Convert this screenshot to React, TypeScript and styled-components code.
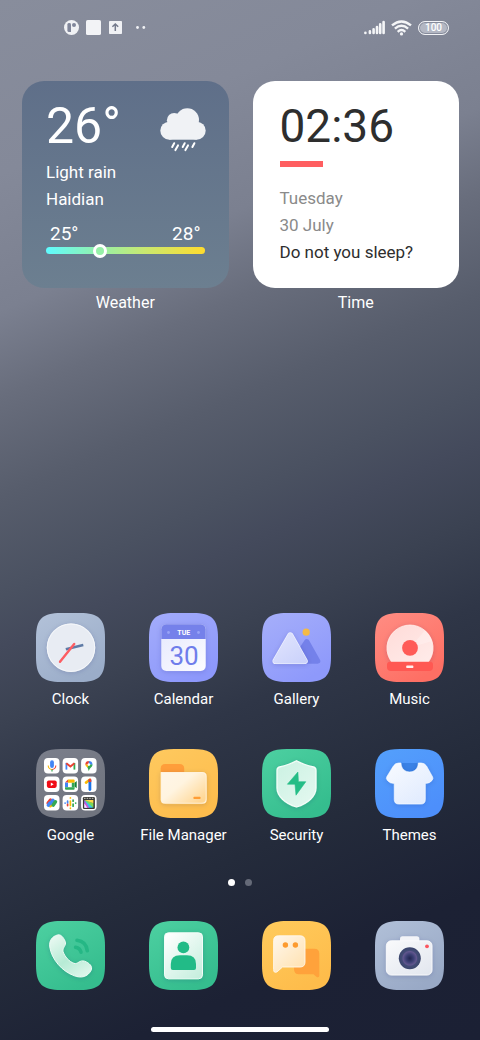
import React from "react";
import styled, { createGlobalStyle } from "styled-components";

const GlobalStyle = createGlobalStyle`
  * { box-sizing: border-box; }
  body {
    margin: 0;
    background: #1c2134;
    font-family: Roboto, "Noto Sans", sans-serif;
    color: #fff;
  }
  h1, p { margin: 0; font-weight: 400; }
`;

const Screen = styled.main`
  display: flex;
  flex-direction: column;
  min-height: 100vh;
  background: linear-gradient(
    157deg,
    #888d9c 0%,
    #848999 14%,
    #7b8090 25%,
    #686d7c 32%,
    #575d6c 40%,
    #4a5161 48%,
    #444a5c 52%,
    #3b4252 58%,
    #2f3647 65%,
    #242b3b 77%,
    #1c2134 88%,
    #1b2034 100%
  );
`;

const StatusBar = styled.header`
  display: flex;
  justify-content: space-between;
  align-items: center;
  height: 55px;
  padding: 0 31px 0 64px;
`;

const StatusGroup = styled.div<{ $gap: number }>`
  display: flex;
  align-items: center;
  gap: ${(p) => p.$gap}px;
  svg { display: block; }
`;

const Battery = styled.span`
  display: grid;
  place-items: center;
  width: 31px;
  height: 14px;
  border: 1px solid #f2f3f6;
  border-radius: 7px;
  background: #b3b7c3;
  box-shadow: inset 0 0 0 1px #868b9b;
  font-size: 10px;
  font-weight: 500;
  line-height: 12px;
`;

const Widgets = styled.section`
  display: grid;
  grid-template-columns: 1fr 1fr;
  gap: 24px;
  padding: 26px 21px 0 22px;
`;

const Widget = styled.article`
  display: flex;
  flex-direction: column;
  align-items: stretch;
`;

const Card = styled.div<{ $light?: boolean }>`
  aspect-ratio: 1;
  padding: ${(p) => (p.$light ? "20px 27px" : "20px 24px")};
  border-radius: 22px;
  background: ${(p) => (p.$light ? "#fff" : "linear-gradient(#5f6f89, #6c7f90)")};
  color: ${(p) => (p.$light ? "#2e2e2e" : "#fff")};
`;

const Caption = styled.span`
  margin-top: 5px;
  font-size: 16px;
  line-height: 20px;
  text-align: center;
`;

const CardTop = styled.div`
  display: flex;
  justify-content: space-between;
  align-items: flex-start;
  height: 58px;
  margin-right: -1px;

  svg { margin-top: 7px; }
`;

const Temperature = styled.p`
  font-size: 50px;
  line-height: 50px;
`;

const ClockFace = styled.h1`
  height: 50px;
  font-size: 46px;
  line-height: 50px;
`;

const Accent = styled.div`
  width: 43px;
  height: 6px;
  margin: 10px 0 18px;
  background: #ff5e60;
`;

const Line = styled.p<{ $muted?: boolean }>`
  font-size: 17px;
  line-height: 27px;
  white-space: nowrap;
  color: ${(p) => (p.$muted ? "#8a8a8a" : "inherit")};
`;

const Range = styled.div`
  display: flex;
  justify-content: space-between;
  padding: 0 4px;
  margin-top: 9px;
  font-size: 19px;
  line-height: 24px;
`;

const Track = styled.div`
  display: flex;
  align-items: center;
  height: 7px;
  margin-top: 1px;
  padding-left: 47px;
  border-radius: 4px;
  background: linear-gradient(90deg, #5ffbff, #96f0a8 34%, #c9e870 62%, #ffdc2e);
`;

const Thumb = styled.span`
  width: 14px;
  height: 14px;
  border: 3px solid #fff;
  border-radius: 50%;
  background: #96f0a8;
`;

const Spacer = styled.div`
  flex: 1;
  min-height: 24px;
`;

const AppGrid = styled.nav`
  display: grid;
  grid-template-columns: repeat(4, 1fr);
  row-gap: 40px;
  padding: 0 14px;
`;

const AppButton = styled.button`
  display: flex;
  flex-direction: column;
  align-items: center;
  gap: 7px;
  padding: 0;
  border: 0;
  background: none;
  color: #fff;
  font: 400 15px/20px Roboto, "Noto Sans", sans-serif;
  white-space: nowrap;
  cursor: pointer;
`;

const Pager = styled.div`
  display: flex;
  justify-content: center;
  gap: 10px;
  padding: 34px 0 35px;
`;

const PageDot = styled.button<{ $active?: boolean }>`
  width: 7px;
  height: 7px;
  padding: 0;
  border: 0;
  border-radius: 50%;
  background: ${(p) => (p.$active ? "#fff" : "#656a78")};
`;

const HomeBar = styled.div`
  width: 37%;
  height: 5px;
  margin: 37px auto 8px;
  border-radius: 3px;
  background: #fff;
`;

const TileSvg = styled.svg`
  display: block;
  width: 69px;
  height: 69px;
`;

const TILE =
  "M0 25C0 6 6 0 25 0H44C63 0 69 6 69 25V44C69 63 63 69 44 69H25C6 69 0 63 0 44Z";

function Tile({ id, from, to, children }: { id: string; from: string; to: string; children: React.ReactNode }) {
  return (
    <TileSvg viewBox="0 0 69 69" aria-hidden="true">
      <defs>
        <linearGradient id={`${id}-bg`} x1="0" y1="0" x2="0.6" y2="1">
          <stop offset="0" stopColor={from} />
          <stop offset="1" stopColor={to} />
        </linearGradient>
        <filter id={`${id}-sh`} x="-30%" y="-30%" width="160%" height="160%">
          <feDropShadow dx="0" dy="1" stdDeviation="2.5" floodColor="#203060" floodOpacity="0.16" />
        </filter>
      </defs>
      <path d={TILE} fill={`url(#${id}-bg)`} />
      {children}
    </TileSvg>
  );
}

function Fade({ id, from, to }: { id: string; from: string; to: string }) {
  return (
    <linearGradient id={id} x1="0.1" y1="0" x2="0.9" y2="1">
      <stop offset="0" stopColor={from} />
      <stop offset="1" stopColor={to} />
    </linearGradient>
  );
}

const ClockIcon = () => (
  <Tile id="clock" from="#b3c2d9" to="#9badc9">
    <circle cx="35" cy="34.7" r="24.2" fill="#e8ecf3" filter="url(#clock-sh)" />
    <circle cx="35" cy="34.7" r="23.7" fill="none" stroke="#f6f8fb" />
    <path d="M29.8 36.2L47.3 32" stroke="#5f7ba6" strokeWidth="2.6" />
    <path d="M38.2 31L24 48.8" stroke="#fc5d62" strokeWidth="2.4" strokeLinecap="round" />
  </Tile>
);

const CalendarIcon = () => (
  <Tile id="cal" from="#a3acfb" to="#8d98fb">
    <Fade id="cal-page" from="#e6e9fd" to="#fbfbff" />
    <rect x="12.3" y="11.3" width="44.4" height="46.7" rx="5" fill="url(#cal-page)" filter="url(#cal-sh)" />
    <path d="M12.3 26V16.3a5 5 0 015-5H51.7a5 5 0 015 5V26Z" fill="#7581ea" />
    <circle cx="19.5" cy="19.5" r="1.4" fill="#98a3f6" />
    <circle cx="49.5" cy="19.5" r="1.4" fill="#98a3f6" />
    <text x="34.8" y="22" fontSize="7" fontWeight="700" textAnchor="middle" fill="#fff">TUE</text>
    <text x="35" y="51.5" fontSize="26" fontFamily='"Liberation Sans Narrow", Roboto, sans-serif' textAnchor="middle" fill="#6f7deb">30</text>
  </Tile>
);

const GalleryIcon = () => (
  <Tile id="gal" from="#a6affa" to="#8e99fb">
    <Fade id="gal-hill" from="#dfe3fd" to="#ccd3fb" />
    <path d="M44.8 28.8L55.6 48H32Z" fill="#7481ea" stroke="#7481ea" strokeWidth="5.4" strokeLinejoin="round" />
    <path d="M28.3 22.5L42.6 48H13.6Z" fill="#f3f5ff" stroke="#f3f5ff" strokeWidth="6.2" strokeLinejoin="round" filter="url(#gal-sh)" />
    <path d="M28.3 22.5L42.6 48H13.6Z" fill="url(#gal-hill)" stroke="url(#gal-hill)" strokeWidth="5" strokeLinejoin="round" />
    <circle cx="44.2" cy="19.2" r="3.6" fill="#f4ba45" />
  </Tile>
);

const MusicIcon = () => (
  <Tile id="mus" from="#ff8d83" to="#fe6f64">
    <Fade id="mus-disc" from="#ffdcd9" to="#ffebe9" />
    <path d="M16.7 49A23 23 0 1153.3 49Z" fill="url(#mus-disc)" stroke="#fff2f0" strokeWidth="0.8" filter="url(#mus-sh)" />
    <path d="M35 34.7L50 17.2A23 23 0 0157 28Z" fill="#fff" opacity="0.25" />
    <circle cx="35" cy="34.9" r="7.9" fill="#ff5b57" />
    <path d="M15 48.8H55Q58 48.8 58 52V54Q58 58 54 58H16Q12 58 12 54V52Q12 48.8 15 48.8Z" fill="#ff5852" />
    <rect x="31.3" y="52.6" width="7" height="2.4" rx="0.6" fill="#fff0ee" />
  </Tile>
);

const MINI = [8, 26.6, 45.1];

const GoogleIcon = () => (
  <Tile id="goo" from="#7b7f8b" to="#70747f">
    {MINI.map((y) => MINI.map((x) => (
      <rect key={`${x}-${y}`} x={x} y={y + 1} width="15.5" height="15.5" rx="4" fill="#fff" />
    )))}
    {/* voice search */}
    <rect x="14.1" y="11.3" width="3.8" height="7.6" rx="1.9" fill="#4285f4" />
    <path d="M12.2 16.5c0 2 1.4 4 3.8 4" fill="none" stroke="#f4b400" strokeWidth="1.1" />
    <path d="M19.8 16.5c0 2-1.4 4-3.8 4" fill="none" stroke="#ea4335" strokeWidth="1.1" />
    <path d="M16 20.4v2.2" stroke="#34a853" strokeWidth="1.2" />
    {/* mail */}
    <path d="M30.4 20.6v-6.7" stroke="#4285f4" strokeWidth="1.8" />
    <path d="M38.4 20.6v-6.7" stroke="#34a853" strokeWidth="1.8" />
    <path d="M30.3 14.2l4.1 3.4 4.1-3.4" fill="none" stroke="#ea4335" strokeWidth="2" strokeLinejoin="round" />
    {/* maps */}
    <path d="M49.3 15.7a3.7 3.7 0 013.6-3.7v3.7Z" fill="#ea4335" />
    <path d="M52.9 12a3.7 3.7 0 013.6 3.7h-3.6Z" fill="#4285f4" />
    <path d="M49.3 15.6h3.6v4.2c-2-2-3.6-2.6-3.6-4.2Z" fill="#fbbc04" />
    <path d="M56.5 15.6h-3.6l-1.4 2.8 1.4 3.8c.7-3.3 3.6-3.9 3.6-6.6Z" fill="#34a853" />
    <circle cx="52.9" cy="15.6" r="1.3" fill="#fff" />
    {/* video */}
    <rect x="10.9" y="31.5" width="9.8" height="7.4" rx="1.8" fill="#f00c16" />
    <path d="M14.8 33.5v3.4l2.9-1.7Z" fill="#fff" />
    {/* meet */}
    <path d="M29 33.6l3-3v3Z" fill="#ea4335" />
    <path d="M32 30.6h5.6q1 0 1 1v2.2h-6.6Z" fill="#fbbc04" />
    <path d="M29 33.6h3v4.6h-3Z" fill="#4285f4" />
    <path d="M29 38.2h9.6v1.6q0 1-1 1h-7.6q-1 0-1-1Z" fill="#34a853" />
    <path d="M38.6 33.8l2.1-1.9v7.4l-2.1-1.7Z" fill="#188038" />
    <path d="M35.8 33.8h2.8v4.6h-2.8Z" fill="#34a853" />
    {/* one */}
    <path d="M50 33.6l3.8-2.8" stroke="#fbbc04" strokeWidth="2.6" strokeLinecap="round" />
    <path d="M53.9 31.3v9.2" stroke="#1a73e8" strokeWidth="2.8" strokeLinecap="round" />
    <path d="M52.5 30.4l1.4-1a1.4 1.4 0 011.4 1.4v2.2h-2.8Z" fill="#ea4335" />
    {/* pay */}
    <g strokeLinecap="round" strokeWidth="3.6">
      <path d="M12.2 54.2l2.4-3.1" stroke="#ea4335" />
      <path d="M14.4 56.6l1.3-1.6" stroke="#fbbc04" />
      <path d="M15.4 53.6l1.6-2.2" stroke="#4285f4" />
      <path d="M17.2 56l2.2-3.2" stroke="#34a853" />
      <path d="M12.4 56.2l1.6-2" stroke="#4285f4" />
    </g>
    {/* podcasts */}
    <g strokeLinecap="round" strokeWidth="1.7">
      <path d="M29.1 54v.1M31.6 52v2" stroke="#4285f4" />
      <path d="M31.6 55.4v1.2" stroke="#ea4335" />
      <path d="M34.4 48.9v.1M34.4 52v4.4M34.4 59.2v.1" stroke="#fbbc04" />
      <path d="M37.1 51v1.2" stroke="#34a853" />
      <path d="M37.1 55v2.2M39.7 54v.1" stroke="#34a853" />
    </g>
    {/* video editor */}
    <rect x="46.9" y="48" width="12" height="12" rx="1.2" fill="#3a3a38" />
    <path d="M48.4 51.2h4l4.6 7.6h-8.6Z" fill="#35c8e8" />
    <path d="M48.4 51h4.8l3.6 3.4Z" fill="#ff9a3c" />
    <path d="M48.4 51h9v3.2Z" fill="#ffd84a" />
    <path d="M48.4 51l9 3.2v4.6Z" fill="#7ed957" />
    <path d="M48.4 51l4.8 7.8h-4.8Z" fill="#d14fd8" />
    <path d="M48.4 54.4l2.8 4.4h-2.8Z" fill="#f5f0ff" />
    <path d="M48 49.3h10" stroke="#d8d8c8" strokeWidth="0.9" strokeDasharray="1.6 1" />
  </Tile>
);

const FilesIcon = () => (
  <Tile id="fil" from="#fec95f" to="#febd4d">
    <linearGradient id="fil-body" x1="0" y1="0" x2="1" y2="0.8">
      <stop offset="0" stopColor="#fff6e8" />
      <stop offset="0.45" stopColor="#fff4e0" />
      <stop offset="1" stopColor="#ffd795" />
    </linearGradient>
    <path d="M11.7 24V19.5Q11.7 15 16.2 15H30.5Q35.2 15 35.2 19.5V24Z" fill="#ff9e3a" />
    <path d="M11.7 23H53.2Q57.7 23 57.7 27.5V50.2Q57.7 54.7 53.2 54.7H16.2Q11.7 54.7 11.7 50.2Z" fill="#fff2dc" filter="url(#fil-sh)" />
    <path d="M12.6 24H52.7Q56.7 24 56.7 28V49.7Q56.7 53.7 52.7 53.7H16.6Q12.6 53.7 12.6 49.7Z" fill="url(#fil-body)" />
    <rect x="44.4" y="47.7" width="7.2" height="2.4" rx="0.8" fill="#ff9d35" />
  </Tile>
);

const SecurityIcon = () => (
  <Tile id="sec" from="#4dd0a1" to="#35bd8e">
    <Fade id="sec-sh2" from="#ccf2e3" to="#e4f8f0" />
    <path d="M34.5 11.8C41 15.5 47 17 51.5 18Q54 18.6 54 21.5V39C54 47 46 54.5 34.5 58C23 54.5 15 47 15 39V21.5Q15 18.6 17.5 18C22 17 28 15.5 34.5 11.8Z" fill="url(#sec-sh2)" stroke="#f5fdf9" strokeWidth="1.3" filter="url(#sec-sh)" />
    <path d="M35.9 23L25.4 35.2H33L34 46.2L43.8 32.7H36.4Z" fill="#24bd86" stroke="#24bd86" strokeWidth="0.6" strokeLinejoin="round" />
  </Tile>
);

const ThemesIcon = () => (
  <Tile id="the" from="#54a0fc" to="#4d8ffb">
    <Fade id="the-cloth" from="#f7faff" to="#dfeafe" />
    <path d="M24 14H46V25H24Z" fill="#3a82e6" />
    <path d="M26 14C26 26 43.3 26 43.3 14H46Q49.5 14 51.5 17L57.6 28Q58.4 29.8 57 31.4Q54.8 34.4 50.3 34.4V50.5Q50.3 55 45.8 55H23.8Q19.3 55 19.3 50.5V34.4Q14.8 34.4 12.4 31.4Q10.8 29.6 11.8 27.8L18.4 17Q20.3 14 23.8 14Z" fill="url(#the-cloth)" stroke="#fff" strokeWidth="0.6" filter="url(#the-sh)" />
  </Tile>
);

const PhoneIcon = () => (
  <Tile id="pho" from="#4dd0a1" to="#35bd8e">
    <linearGradient id="pho-set" x1="0.2" y1="0" x2="0.9" y2="1">
      <stop offset="0" stopColor="#e6f8f0" />
      <stop offset="0.5" stopColor="#b7ebd5" />
      <stop offset="1" stopColor="#e0f7ed" />
    </linearGradient>
    <path d="M21.5 14C24.5 13 27.3 16 29.2 20.5C30.8 24.5 26 26.5 27 30.5C28.6 35.5 33 40.5 38 42.4C42 43.6 43.5 38.6 48.5 40.2C53.5 42 57 45.5 55 49.5C51.5 56 45 57.2 38.5 54.8C26 50.5 15.5 38 13.8 26C12.9 20 16 15.4 21.5 14Z" fill="url(#pho-set)" stroke="#eefaf5" strokeWidth="1" filter="url(#pho-sh)" />
    <g fill="none" stroke="#25b785" strokeWidth="3.6" strokeLinecap="round">
      <path d="M39.6 26.2Q44 27 45 31.2" />
      <path d="M41 19.2Q50.3 20.3 51.3 29.8" />
    </g>
  </Tile>
);

const ContactsIcon = () => (
  <Tile id="con" from="#4dd0a1" to="#35bd8e">
    <Fade id="con-card" from="#ffffff" to="#c5eedd" />
    <rect x="15.5" y="11.8" width="38" height="46" rx="4" fill="url(#con-card)" stroke="#f3fcf8" filter="url(#con-sh)" />
    <circle cx="34.4" cy="26.4" r="5.9" fill="#22bb87" />
    <path d="M21.8 47V43Q21.8 34.3 31 34.3H38Q47 34.3 47 43V47Q47 49 45 49H23.8Q21.8 49 21.8 47Z" fill="#22bb87" />
  </Tile>
);

const MessagesIcon = () => (
  <Tile id="mes" from="#ffcb5c" to="#febc4b">
    <Fade id="mes-bub" from="#fff6e9" to="#ffe1af" />
    <path d="M37 27.7H52.3Q57.3 27.7 57.3 32.7V55Q56.6 57.2 54.4 55.8L51.5 53.3H37Q32 53.3 32 48V32.7Q32 27.7 37 27.7Z" fill="#ffa23b" />
    <path d="M16.5 14.8H38Q43 14.8 43 19.8V41Q43 46 38 46H20.5L15 50.9Q11.6 52.4 11.6 48.5V19.8Q11.6 14.8 16.5 14.8Z" fill="url(#mes-bub)" stroke="#fff7ea" strokeWidth="0.9" />
    <circle cx="23.4" cy="24" r="2.7" fill="#fd9b2f" />
    <circle cx="33.4" cy="24" r="2.7" fill="#fd9b2f" />
  </Tile>
);

const CameraIcon = () => (
  <Tile id="cam" from="#b1c0d8" to="#99a9c6">
    <Fade id="cam-body" from="#f8f9fb" to="#e3e7ef" />
    <radialGradient id="cam-lens">
      <stop offset="0" stopColor="#20254f" />
      <stop offset="0.35" stopColor="#3b3f74" />
      <stop offset="0.62" stopColor="#61568e" />
      <stop offset="0.72" stopColor="#434c77" />
      <stop offset="1" stopColor="#3b466c" />
    </radialGradient>
    <g filter="url(#cam-sh)">
      <rect x="25" y="15.3" width="19.3" height="9" rx="2.5" fill="#f2f4f8" />
      <rect x="11.4" y="19.8" width="45.6" height="34.2" rx="5" fill="url(#cam-body)" stroke="#fafbfd" strokeWidth="0.9" />
    </g>
    <circle cx="34.8" cy="37.3" r="11" fill="url(#cam-lens)" />
    <circle cx="52" cy="25.3" r="1.9" fill="#fb5660" />
  </Tile>
);

const RainIcon = () => (
  <svg width="46" height="44" viewBox="0 0 46 44" role="img" aria-label="Light rain">
    <g fill="#f0f2f5">
      <circle cx="9.3" cy="22.7" r="9" />
      <circle cx="14.2" cy="12.2" r="7.3" />
      <circle cx="27.3" cy="12" r="11.7" />
      <circle cx="36.7" cy="22.7" r="9" />
      <path d="M9.3 14H36.7V31.7H9.3Z" />
    </g>
    <path d="M14.2 35.2l-2 3.8M18 37.4l-2.6 4.7M24.7 35.2l-2 3.8M28 37.4l-2.6 4.7M34.4 35.2l-2 3.8" stroke="#fff" strokeWidth="2" strokeLinecap="round" />
  </svg>
);

const NoticeIcons = () => (
  <StatusGroup $gap={7}>
    <svg width="15" height="15" viewBox="0 0 15 15" aria-hidden="true">
      <circle cx="7.5" cy="7.5" r="7.5" fill="#f0f1f4" />
      <path d="M3.4 4.4Q3.4 3 5.2 3Q7 3 7 4.4V12H5Q3.4 12 3.4 10.5Z" fill="#80869a" />
      <circle cx="10" cy="5" r="2" fill="#80869a" />
    </svg>
    <svg width="15" height="15" viewBox="0 0 15 15" aria-hidden="true">
      <rect width="15" height="15" rx="1.6" fill="#f2f3f6" />
    </svg>
    <svg width="15" height="15" viewBox="0 0 15 15" aria-hidden="true">
      <rect x="1" y="1" width="13" height="13" rx="0.8" fill="#f0f1f4" />
      <path d="M7.3 11V4.5M4.4 6.8L7.3 4L10.2 6.8" fill="none" stroke="#747a8c" strokeWidth="1.5" />
    </svg>
    <svg width="20" height="15" viewBox="0 0 20 15" aria-hidden="true">
      <circle cx="7.5" cy="7.5" r="1.4" fill="#f0f1f4" />
      <circle cx="13.8" cy="7.5" r="1.4" fill="#f0f1f4" />
    </svg>
  </StatusGroup>
);

const SystemIcons = () => (
  <StatusGroup $gap={6}>
    <svg width="21" height="15" viewBox="0 0 21 15" role="img" aria-label="Signal">
      <g stroke="#f4f5f7" strokeWidth="2.6" strokeLinecap="round">
        <path d="M1.4 13v-.2M5.9 13v-1.6M9.6 13V9.4M13 13V7M16.2 13V4.4M19.6 13V2" />
      </g>
    </svg>
    <svg width="21" height="16" viewBox="0 0 21 16" role="img" aria-label="Wi-Fi">
      <g fill="none" stroke="#f4f5f7" strokeWidth="2.4">
        <path d="M1 5.4Q10.5-2.6 20 5.4" />
        <path d="M3.9 8.6Q10.5 3 17.1 8.6" />
        <path d="M6.7 11.8Q10.5 8.4 14.3 11.8" />
      </g>
      <circle cx="10.5" cy="13.9" r="1.6" fill="#f4f5f7" />
    </svg>
    <Battery>100</Battery>
  </StatusGroup>
);

const APPS = [
  { name: "Clock", Icon: ClockIcon },
  { name: "Calendar", Icon: CalendarIcon },
  { name: "Gallery", Icon: GalleryIcon },
  { name: "Music", Icon: MusicIcon },
  { name: "Google", Icon: GoogleIcon },
  { name: "File Manager", Icon: FilesIcon },
  { name: "Security", Icon: SecurityIcon },
  { name: "Themes", Icon: ThemesIcon },
];

const DOCK = [
  { name: "Phone", Icon: PhoneIcon },
  { name: "Contacts", Icon: ContactsIcon },
  { name: "Messages", Icon: MessagesIcon },
  { name: "Camera", Icon: CameraIcon },
];

export default function App() {
  return (
    <Screen>
      <GlobalStyle />
      <StatusBar>
        <NoticeIcons />
        <SystemIcons />
      </StatusBar>
      <Widgets>
        <Widget>
          <Card>
            <CardTop>
              <Temperature>26°</Temperature>
              <RainIcon />
            </CardTop>
            <Line>Light rain</Line>
            <Line>Haidian</Line>
            <Range>
              <span>25°</span>
              <span>28°</span>
            </Range>
            <Track>
              <Thumb />
            </Track>
          </Card>
          <Caption>Weather</Caption>
        </Widget>
        <Widget>
          <Card $light>
            <ClockFace>02:36</ClockFace>
            <Accent />
            <Line $muted>Tuesday</Line>
            <Line $muted>30 July</Line>
            <Line>Do not you sleep?</Line>
          </Card>
          <Caption>Time</Caption>
        </Widget>
      </Widgets>
      <Spacer />
      <AppGrid aria-label="Apps">
        {APPS.map(({ name, Icon }) => (
          <AppButton key={name} type="button">
            <Icon />
            {name}
          </AppButton>
        ))}
      </AppGrid>
      <Pager>
        <PageDot type="button" $active aria-label="Page 1" />
        <PageDot type="button" aria-label="Page 2" />
      </Pager>
      <AppGrid aria-label="Dock">
        {DOCK.map(({ name, Icon }) => (
          <AppButton key={name} type="button" aria-label={name}>
            <Icon />
          </AppButton>
        ))}
      </AppGrid>
      <HomeBar />
    </Screen>
  );
}
